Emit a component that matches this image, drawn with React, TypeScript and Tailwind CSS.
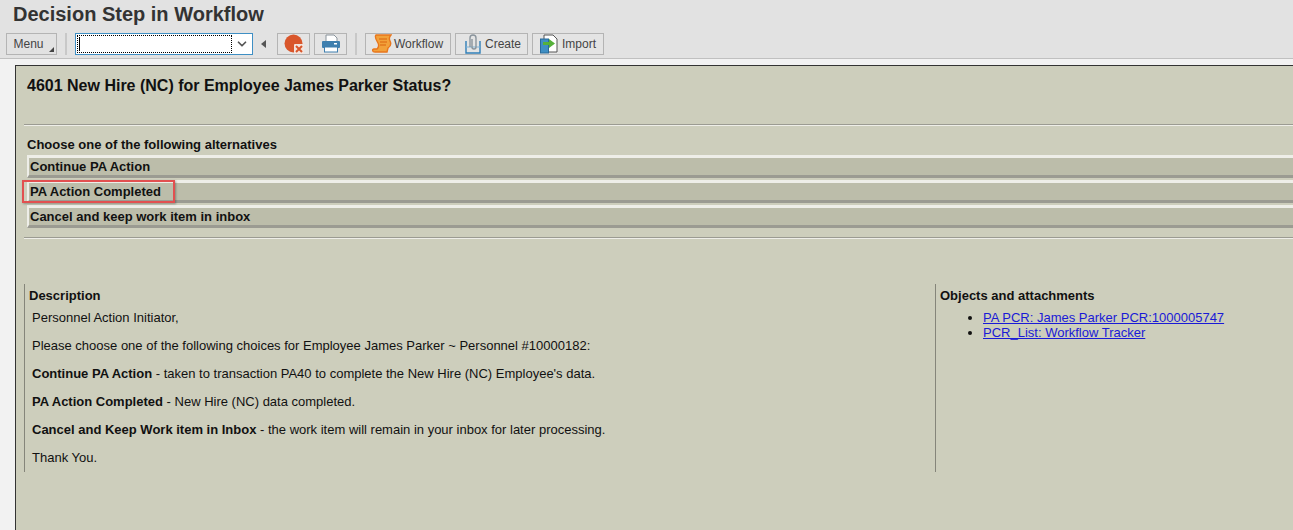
import { ChevronDown } from "lucide-react";

const ScrollIcon = () => (
  <svg width="20" height="20" viewBox="0 0 20 20">
    <path d="M4 1h15c-2 2-2 4-1 6s1 5-2 7l-1 4H3c-3 0-3-3-1-3h3c2-2 2-4 1-6S2 3 4 1z" fill="#f2a13a" stroke="#e8761c" strokeWidth="1.4" />
    <path d="M7 5h8M8 8h7M8 11h6" stroke="#d9640f" strokeWidth="1.2" />
  </svg>
);

const ClipIcon = () => (
  <svg width="16" height="20" viewBox="0 0 16 20" fill="none">
    <path d="M1 7v12h14V7" stroke="#2f7fb8" strokeWidth="1.4" />
    <path d="M1 13h14" stroke="#7fb2d6" strokeWidth="1" />
    <path d="M5 13V4a3 3 0 0 1 6 0v9a2 2 0 0 1-4 0V5" stroke="#8a949c" strokeWidth="1.4" />
  </svg>
);

const ImportIcon = () => (
  <svg width="18" height="20" viewBox="0 0 18 20">
    <path d="M4 1h9l4 4v13H4z" fill="#fff" stroke="#555" strokeWidth="1" />
    <rect x="0.5" y="5" width="8" height="14" fill="#3f8fc4" stroke="#2a6a99" />
    <path d="M3 8h6V5l6 4.5L9 14v-3H3z" fill="#55b13a" />
  </svg>
);

const PrintIcon = () => (
  <svg width="20" height="20" viewBox="0 0 20 20">
    <path d="M5 1h8l3 3v4H5z" fill="#fff" stroke="#8a949c" />
    <rect x="1" y="7" width="18" height="7" rx="1" fill="#3f7fae" />
    <rect x="13" y="9" width="3" height="1.5" fill="#fff" />
    <rect x="3.5" y="13" width="13" height="5" fill="#fff" stroke="#3f7fae" />
  </svg>
);

const CancelIcon = () => (
  <svg width="20" height="20" viewBox="0 0 20 20">
    <circle cx="9.5" cy="9.5" r="9" fill="#d9562b" />
    <rect x="10" y="10" width="10" height="10" rx="1" fill="#f2e4de" />
    <path d="M12 12l6 6M18 12l-6 6" stroke="#d9562b" strokeWidth="2" />
  </svg>
);

const ToolButton = ({ icon, label, width }: { icon: React.ReactNode; label: string; width: string }) => (
  <div className={`flex items-center h-[22px] border border-[#b4b4b4] bg-[#e4e4e4] text-[12px] text-[#444] ${width}`}>
    <div className="shrink-0">{icon}</div>
    {label && <span>{label}</span>}
  </div>
);

const Alternative = ({ label }: { label: string }) => (
  <div className="h-[23px] mb-[2px] border-t-[3px] border-b-[3px] border-l-2 border-t-[#eeeee8] border-l-[#eeeee8] border-b-[#9b9b92] bg-[#bcbdaa] pl-[1px] text-[13px] font-bold leading-[17px] text-[#111]">
    {label}
  </div>
);

const App = () => {
  return (
    <div className="w-[1293px] h-[530px] overflow-hidden bg-[#f2f2f2] font-['Liberation_Sans',Arial,sans-serif]">
      <div className="h-[29px] bg-[#e2e2e2] pl-[13px] pt-[1px] text-[20px] font-bold leading-[26px] text-[#333]">
        Decision Step in Workflow
      </div>

      <div className="flex h-[30px] items-center border-b border-[#c0c0c0] bg-[#e2e2e2] pl-[6px]">
        <div className="relative flex h-[22px] w-[51px] items-center justify-center border border-[#b4b4b4] pr-[6px] text-[12px] text-[#444]">
          Menu
          <div className="absolute bottom-[2px] right-[2px] border-b-[5px] border-l-[5px] border-b-[#444] border-l-transparent"></div>
        </div>
        <div className="ml-[8px] h-[22px] w-[2px] bg-[#c8c8c8]"></div>
        <div className="ml-[8px] flex h-[22px] w-[178px] items-center border border-[#3f8fc4] bg-white p-[1px]">
          <div className="h-full w-[155px] border border-dotted border-black">
            <div className="ml-[1px] mt-[1px] h-[14px] w-[1px] bg-black"></div>
          </div>
          <ChevronDown size={14} strokeWidth={3} className="ml-[3px] text-[#555]" />
        </div>
        <div className="ml-[8px] h-0 w-0 border-y-[4px] border-r-[5px] border-y-transparent border-r-[#555]"></div>
        <div className="ml-[11px] flex items-center gap-[4px]">
          <ToolButton icon={<CancelIcon />} label="" width="w-[33px] px-[6px]" />
          <ToolButton icon={<PrintIcon />} label="" width="w-[33px] px-[6px]" />
        </div>
        <div className="ml-[8px] h-[22px] w-[2px] bg-[#c8c8c8]"></div>
        <div className="ml-[8px] flex items-center gap-[4px]">
          <ToolButton icon={<ScrollIcon />} label="Workflow" width="w-[86px] gap-[2px] pl-[6px]" />
          <ToolButton icon={<ClipIcon />} label="Create" width="w-[73px] gap-[4px] pl-[9px]" />
          <ToolButton icon={<ImportIcon />} label="Import" width="w-[72px] gap-[4px] pl-[7px]" />
        </div>
      </div>

      <div className="ml-[15px] mt-[6px] h-[465px] border-l border-t border-[#333] bg-[#cdcebc]">
        <div className="pl-[11px] pt-[10px] text-[16px] font-bold leading-[20px] text-[#111]">
          4601 New Hire (NC) for Employee James Parker Status?
        </div>

        <div className="ml-[8px] mt-[28px] h-[2px] border-t border-[#9b9b92] bg-[#eeeee8]"></div>

        <div className="pl-[11px] pt-[11px] text-[13px] font-bold leading-[16px] text-[#111]">
          Choose one of the following alternatives
        </div>

        <div className="relative ml-[11px] mt-[2px]">
          <Alternative label="Continue PA Action" />
          <Alternative label="PA Action Completed" />
          <Alternative label="Cancel and keep work item in inbox" />
          <div className="absolute left-[-5px] top-[25px] h-[23px] w-[153px] border-2 border-[#e25050] shadow-[1px_1px_2px_rgba(0,0,0,0.3)]"></div>
        </div>

        <div className="ml-[8px] mt-[9px] h-[2px] border-t border-[#9b9b92] bg-[#eeeee8]"></div>

        <div className="ml-[8px] mt-[45px] flex h-[188px] text-[13px] text-[#111]">
          <div className="w-[911px] border-l border-[#85857a] pl-[4px] pt-[4px]">
            <div className="font-bold leading-[16px]">Description</div>
            <div className="pl-[3px] pt-[7px] leading-[14px]">
              <p>Personnel Action Initiator,</p>
              <p className="mt-[14px]">Please choose one of the following choices for Employee James Parker ~ Personnel #10000182:</p>
              <p className="mt-[14px]"><b>Continue PA Action</b> - taken to transaction PA40 to complete the New Hire (NC) Employee's data.</p>
              <p className="mt-[14px]"><b>PA Action Completed</b> - New Hire (NC) data completed.</p>
              <p className="mt-[14px]"><b>Cancel and Keep Work item in Inbox</b> - the work item will remain in your inbox for later processing.</p>
              <p className="mt-[14px]">Thank You.</p>
            </div>
          </div>
          <div className="flex-1 border-l border-[#85857a] pl-[4px] pt-[4px]">
            <div className="font-bold leading-[16px]">Objects and attachments</div>
            <ul className="list-disc pl-[43px] pt-[6px] leading-[15px]">
              <li><a className="text-[#1a1ad6] underline" href="#">PA PCR: James Parker PCR:1000005747</a></li>
              <li><a className="text-[#1a1ad6] underline" href="#">PCR_List: Workflow Tracker</a></li>
            </ul>
          </div>
        </div>
      </div>
    </div>
  );
};

export default App;
